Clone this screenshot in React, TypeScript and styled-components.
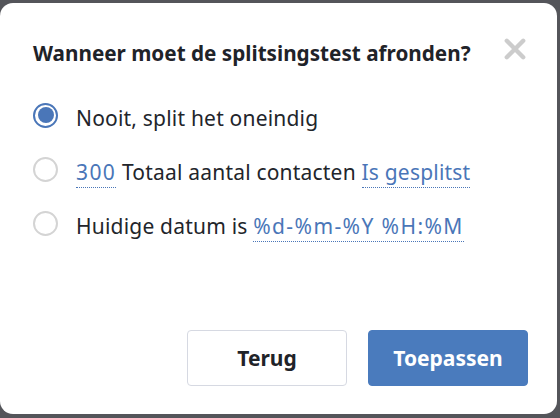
import React, { useState } from "react";
import styled, { createGlobalStyle } from "styled-components";

const Global = createGlobalStyle`
  html, body { margin: 0; padding: 0; }
  body {
    background: #54555a;
    width: 560px;
    height: 418px;
    overflow: hidden;
    font-family: "Noto Sans", "Open Sans", sans-serif;
  }
`;

const Backdrop = styled.div`
  width: 560px;
  height: 418px;
  padding: 3px 3px 4px 0;
  box-sizing: border-box;
  display: flex;
`;

const Modal = styled.div`
  flex: 1;
  background: #fff;
  border-radius: 13px;
  display: flex;
  flex-direction: column;
  padding: 36px 29px 28px 33px;
  box-sizing: border-box;
`;

const Header = styled.div`
  display: flex;
  justify-content: space-between;
  align-items: flex-start;
`;

const Title = styled.h2`
  margin: 0;
  font-size: 20.7px;
  font-weight: 700;
  color: #1f2329;
  line-height: 28px;
`;

const Close = styled.button`
  border: none;
  background: none;
  padding: 0;
  width: 22px;
  height: 22px;
  margin: -1px 2px 0 0;
  cursor: pointer;
  display: flex;
`;

const Options = styled.div`
  display: flex;
  flex-direction: column;
  margin-top: 24px;
`;

const Row = styled.label`
  display: flex;
  align-items: center;
  height: 54px;
  line-height: 54px;
  font-size: 21px;
  letter-spacing: 0.2px;
  color: #22252b;
  cursor: pointer;
`;

const Radio = styled.span<{ $checked: boolean }>`
  width: 25px;
  height: 25px;
  border-radius: 50%;
  box-sizing: border-box;
  border: ${(p) => (p.$checked ? "2.5px solid #4a76b8" : "2px solid #d4d4d4")};
  margin: 0 18px 6px 0;
  display: flex;
  align-items: center;
  justify-content: center;
  flex-shrink: 0;
  &::after {
    content: "";
    width: 16px;
    height: 16px;
    border-radius: 50%;
    background: ${(p) => (p.$checked ? "#4a76b8" : "transparent")};
  }
`;

const Label = styled.span`
  white-space: pre;
`;

const Link = styled.span<{ $wide?: boolean }>`
  color: #4a76b8;
  border-bottom: 1px dotted #4a76b8;
  padding-bottom: 1px;
  line-height: normal;
  letter-spacing: ${(p) => (p.$wide ? "1.4px" : "0.2px")};
`;

const Footer = styled.div`
  margin-top: auto;
  display: flex;
  justify-content: flex-end;
  gap: 21px;
`;

const Button = styled.button<{ $primary?: boolean }>`
  width: 160px;
  height: 56px;
  border-radius: 4px;
  font-family: inherit;
  font-size: 21px;
  font-weight: 700;
  cursor: pointer;
  border: 1px solid ${(p) => (p.$primary ? "#4a7bbd" : "#d6d9e2")};
  background: ${(p) => (p.$primary ? "#4a7bbd" : "#fff")};
  color: ${(p) => (p.$primary ? "#fff" : "#1f2329")};
`;

export default function App() {
  const [sel, setSel] = useState(0);
  return (
    <>
      <Global />
      <Backdrop>
        <Modal>
          <Header>
            <Title>Wanneer moet de splitsingstest afronden?</Title>
            <Close aria-label="Sluiten">
              <svg width="22" height="22" viewBox="0 0 22 22">
                <path d="M2.8 2.8 L19.2 19.2 M19.2 2.8 L2.8 19.2" stroke="#cccccc" strokeWidth="4.4" strokeLinecap="round" />
              </svg>
            </Close>
          </Header>
          <Options>
            <Row onClick={() => setSel(0)}>
              <Radio $checked={sel === 0} />
              <Label>Nooit, split het oneindig</Label>
            </Row>
            <Row onClick={() => setSel(1)}>
              <Radio $checked={sel === 1} />
              <Label>
                <Link $wide>300</Link> Totaal aantal contacten <Link>Is gesplitst</Link>
              </Label>
            </Row>
            <Row onClick={() => setSel(2)}>
              <Radio $checked={sel === 2} />
              <Label>
                Huidige datum is <Link $wide>%d-%m-%Y %H:%M</Link>
              </Label>
            </Row>
          </Options>
          <Footer>
            <Button>Terug</Button>
            <Button $primary>Toepassen</Button>
          </Footer>
        </Modal>
      </Backdrop>
    </>
  );
}
